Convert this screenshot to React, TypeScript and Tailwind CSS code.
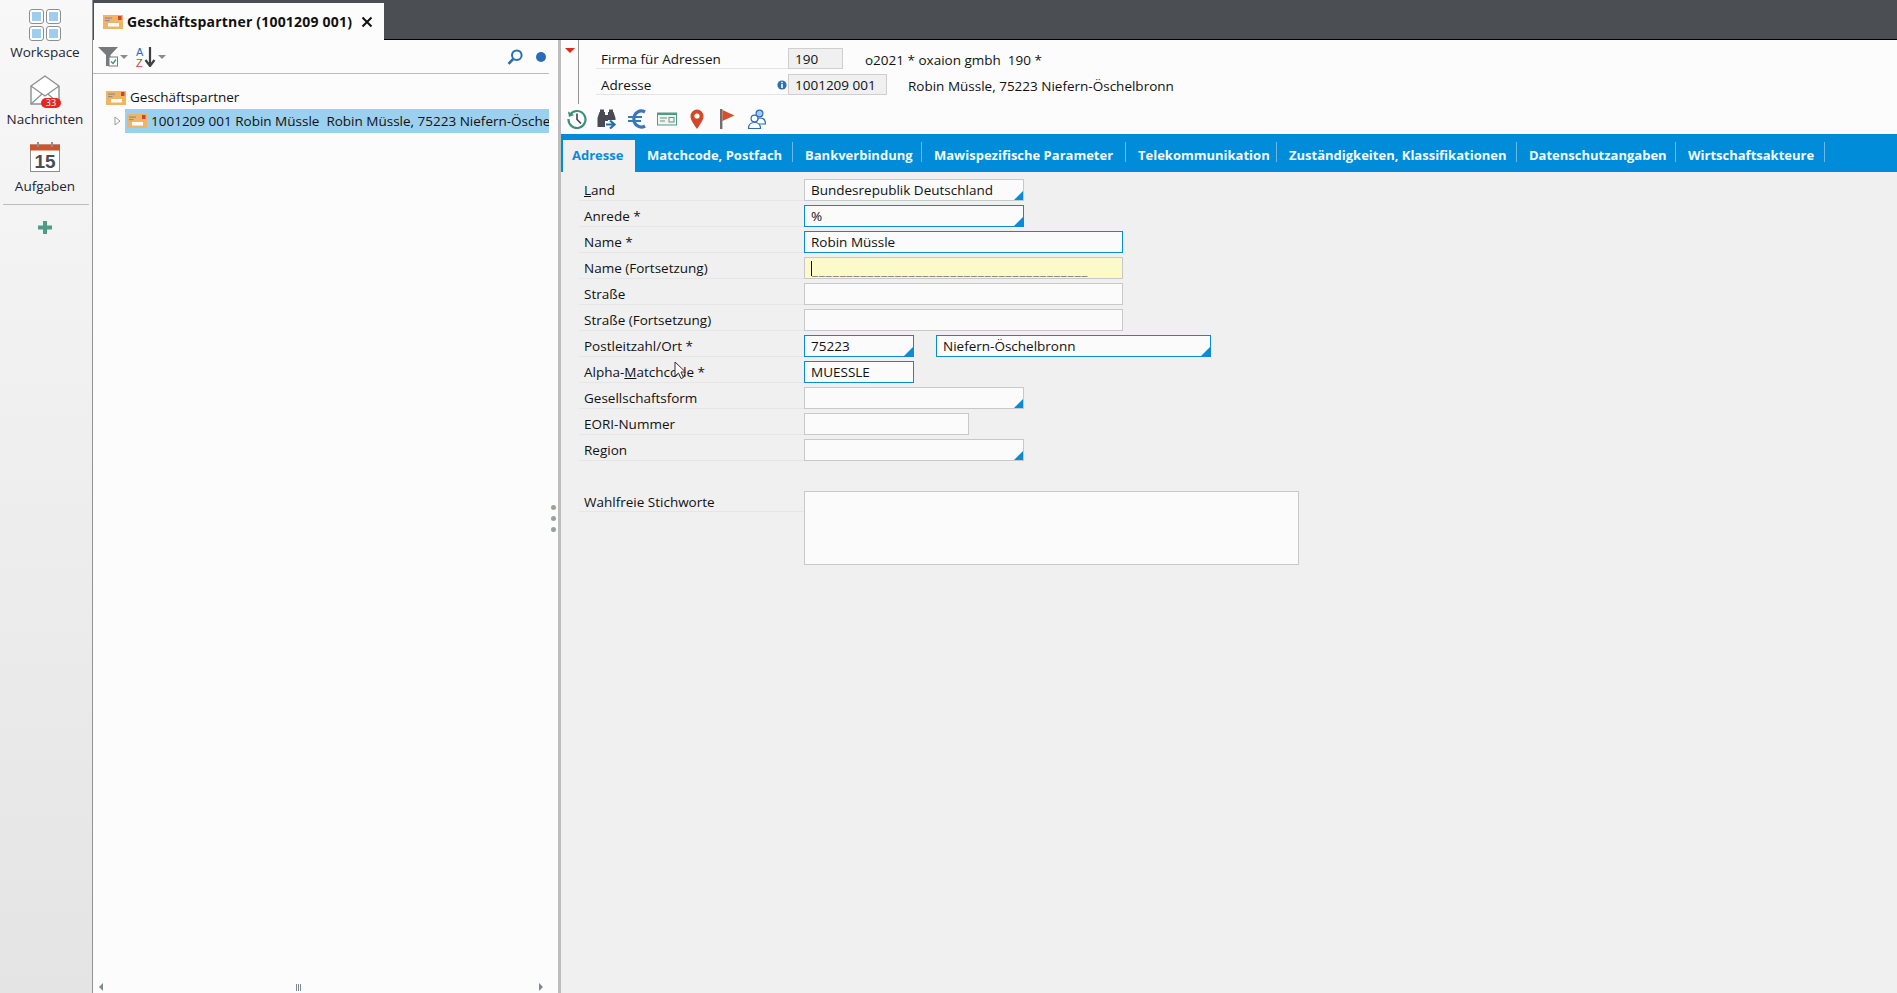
import type { ReactNode } from "react";

const fields = [
  { label: "Land", key: "L", value: "Bundesrepublik Deutschland", w: "w-[220px]", drop: true },
  { label: "Anrede *", value: "%", w: "w-[220px]", drop: true, blue: true },
  { label: "Name *", value: "Robin Müssle", w: "w-[319px]", blue: true },
  { label: "Name (Fortsetzung)", w: "w-[319px]", focus: true },
  { label: "Straße", w: "w-[319px]" },
  { label: "Straße (Fortsetzung)", w: "w-[319px]" },
  { label: "Postleitzahl/Ort *", value: "75223", w: "w-[110px]", drop: true, blue: true, city: true },
  { label: "Alpha-Matchcode *", key: "M", value: "MUESSLE", w: "w-[110px]", blue: true },
  { label: "Gesellschaftsform", w: "w-[220px]", drop: true },
  { label: "EORI-Nummer", w: "w-[165px]" },
  { label: "Region", w: "w-[220px]", drop: true },
];

const tabs = [
  { t: "Matchcode, Postfach", w: "w-[158px]" },
  { t: "Bankverbindung", w: "w-[129px]" },
  { t: "Mawispezifische Parameter", w: "w-[204px]" },
  { t: "Telekommunikation", w: "w-[151px]" },
  { t: "Zuständigkeiten, Klassifikationen", w: "w-[240px]" },
  { t: "Datenschutzangaben", w: "w-[159px]" },
  { t: "Wirtschaftsakteure", w: "w-[149px]" },
];

function MailCard({ className }: { className: string }) {
  return (
    <svg viewBox="0 0 20 14" className={className}>
      <rect width="20" height="14" fill="#efb562" />
      <rect x="2" y="2.5" width="7" height="1.2" fill="#8a8f95" />
      <rect x="2" y="5" width="4.5" height="1.2" fill="#8a8f95" />
      <rect x="15" y="1" width="3.5" height="4" fill="#d2452a" />
      <rect x="5" y="8" width="11" height="3.5" fill="#ffffff" />
    </svg>
  );
}

function Caret() {
  return <div className="w-0 h-0 border-x-[4px] border-x-transparent border-t-[4px] border-t-[#8b8b8b]" />;
}

function DropMark() {
  return <div className="absolute right-0 bottom-0 w-0 h-0 border-l-[9px] border-l-transparent border-b-[9px] border-b-[#0a8bd8]" />;
}

function Rail({ label, labelGap = "mt-[2px]", children }: { label: string; labelGap?: string; children: ReactNode }) {
  return (
    <div className="flex flex-col items-center h-[67px] pr-[2px]">
      <div className="h-[33px] flex items-center justify-center">{children}</div>
      <div className={labelGap + " leading-[18px] text-[#1c2530]"}>{label}</div>
    </div>
  );
}

function HeaderRow({ label, value, w, text, info, gap }: { label: string; value: string; w: string; text: string; info?: boolean; gap: string }) {
  return (
    <div className="flex h-[21px] mb-[5px]">
      <div className="w-[192px] pl-[5px] pt-[2px] border-b border-[#e4e4e4] flex items-center justify-between pr-[1px]">
        <span>{label}</span>
        {info && (
          <svg viewBox="0 0 10 10" className="w-[10px] h-[10px]">
            <circle cx="5" cy="5" r="4.6" fill="#2f6fb0" />
            <rect x="4.2" y="1.8" width="1.6" height="1.4" fill="#fff" />
            <rect x="4.2" y="4" width="1.6" height="4" fill="#fff" />
          </svg>
        )}
      </div>
      <div className={w + " bg-[#f0f0f0] border border-[#cfcfcf] pl-[6px] pt-[2px] flex items-center"}>{value}</div>
      <div className={gap + " whitespace-pre pt-[3px] flex items-center"}>{text}</div>
    </div>
  );
}

function Field({ f }: { f: (typeof fields)[number] }) {
  const border = f.blue ? "border-[#0a8bd8]" : "border-[#c8c8c8]";
  const bg = f.focus ? "bg-[#fbfac8]" : "bg-[#fbfbfb]";
  return (
    <div className="flex h-[22px] mb-[4px]">
      <div className="w-[225px] pl-[5px] pt-[1px] border-b border-[#e6e6e6] flex items-center">
        {f.key ? (
          f.key === "L" ? (
            <span><span className="underline">L</span>and</span>
          ) : (
            <span>Alpha-<span className="underline">M</span>atchcode *</span>
          )
        ) : (
          f.label
        )}
      </div>
      <div className={f.w + " relative border pl-[6px] pt-[1px] flex items-center " + border + " " + bg}>
        {f.value}
        {f.focus && (
          <>
            <div className="absolute left-[6px] top-[3px] w-px h-[15px] bg-[#111]" />
            <div className="absolute left-[7px] top-[3px] whitespace-pre tracking-[1px] text-[#777] leading-[18px]">
              {"_".repeat(40)}
            </div>
          </>
        )}
        {f.drop && <DropMark />}
      </div>
      {f.city && (
        <div className="ml-[22px] w-[275px] relative border border-[#0a8bd8] bg-[#fbfbfb] pl-[6px] pt-[1px] flex items-center">
          Niefern-Öschelbronn
          <DropMark />
        </div>
      )}
    </div>
  );
}

export default function App() {
  return (
    <div className="relative flex h-screen w-screen overflow-hidden bg-[#f0f0f0] text-[13.5px] text-[#111] font-['Open_Sans',sans-serif]">
      {/* linke Leiste */}
      <div className="w-[93px] shrink-0 flex flex-col border-r border-[#8f9396] bg-gradient-to-b from-[#f8f8f8] to-[#e4e4e4]">
        <div className="pt-[8px] flex flex-col">
          <Rail label="Workspace">
            <svg viewBox="0 0 32 32" className="w-[32px] h-[32px]">
              {[0, 17].map((x) =>
                [0, 17].map((y) => (
                  <g key={x + "-" + y}>
                    <rect x={x + 0.5} y={y + 0.5} width="14" height="14" rx="2.5" fill="#fff" stroke="#8c8f92" />
                    <rect x={x + 3} y={y + 3} width="9" height="9" fill="#9ecdf0" />
                  </g>
                ))
              )}
            </svg>
          </Rail>
          <Rail label="Nachrichten">
            <div className="relative w-[32px] h-[33px]">
              <svg viewBox="0 0 30 31" className="w-[30px] h-[31px] ml-[1px]">
                <path d="M1 11 L15 1 L29 11 V29 H1 Z" fill="#fff" stroke="#8c8f92" strokeWidth="1.4" />
                <path d="M1 11 L15 21 L29 11 M1 29 L12 19 M29 29 L18 19" fill="none" stroke="#8c8f92" strokeWidth="1.2" />
              </svg>
              <div className="absolute left-[12px] top-[23px] w-[20px] h-[10px] rounded-full bg-[#e0281c] text-white text-[9px] leading-[10px] text-center">33</div>
            </div>
          </Rail>
          <div className="-mt-[2px]">
            <Rail label="Aufgaben" labelGap="mt-[4px]">
              <svg viewBox="0 0 30 30" className="w-[30px] h-[30px]">
                <rect x="0.5" y="3" width="29" height="26.5" fill="#fff" stroke="#8c8f92" />
                <rect x="0" y="2.5" width="30" height="6" fill="#d2502e" />
                <rect x="7" y="0" width="2" height="5" fill="#8c8f92" />
                <rect x="21" y="0" width="2" height="5" fill="#8c8f92" />
                <text x="15" y="26" textAnchor="middle" fontSize="19" fontWeight="700" fill="#4a4d52" fontFamily="Liberation Sans">15</text>
              </svg>
            </Rail>
          </div>
        </div>
        <div className="mx-[3px] -mt-[3px] border-t border-[#bdbdbd]" />
        <div className="mt-[16px] flex justify-center pr-[2px]">
          <svg viewBox="0 0 14 13" className="w-[14px] h-[13px]">
            <path d="M5 0h4v4.5h5v4H9V13H5V8.5H0v-4h5z" fill="#4f9c85" />
          </svg>
        </div>
      </div>

      <div className="flex-1 min-w-0 flex flex-col">
        {/* Kopfleiste mit Reiter */}
        <div className="h-[40px] shrink-0 flex items-end bg-[#4b4e53]">
          <div className="h-[37px] w-[290px] bg-[#fcfcfc] flex items-center pl-[9px] ml-[1px]">
            <MailCard className="w-[20px] h-[14px]" />
            <span className="ml-[4px] text-[14px] tracking-[0.2px] font-bold whitespace-nowrap text-[#111]">Geschäftspartner (1001209 001)</span>
            <svg viewBox="0 0 12 12" className="w-[12px] h-[12px] ml-[9px]">
              <path d="M1.5 1.5 L10.5 10.5 M10.5 1.5 L1.5 10.5" stroke="#111" strokeWidth="2" />
            </svg>
          </div>
          <div className="flex-1 h-full border-b border-black" />
        </div>

        <div className="flex-1 min-h-0 flex">
          {/* Baum */}
          <div className="w-[465px] shrink-0 bg-[#fcfcfc] pr-[9px] flex flex-col relative">
            <div className="h-[34px] shrink-0 border-b border-[#bdbdbd] flex items-center pl-[5px]">
              <svg viewBox="0 0 21 20" className="w-[21px] h-[20px]">
                <path d="M0 0 H20 L12.5 8 V19 H8 V8 Z" fill="#77797c" />
                <rect x="11" y="10" width="8.5" height="9" fill="#fff" stroke="#77797c" />
                <path d="M13 14.5 L15 16.5 L18 12.5" fill="none" stroke="#3d9b78" strokeWidth="1.4" />
              </svg>
              <div className="ml-[1px]"><Caret /></div>
              <svg viewBox="0 0 20 20" className="w-[20px] h-[20px] ml-[8px]">
                <text x="0" y="9" fontSize="11" fontWeight="400" fill="#2a6cb5" fontFamily="Liberation Sans">A</text>
                <text x="0" y="19.5" fontSize="11" fontWeight="400" fill="#d2452a" fontFamily="Liberation Sans">Z</text>
                <path d="M14 0 V17 M9.5 13 L14 19 L18.5 13" fill="none" stroke="#3d3f42" strokeWidth="2.2" />
              </svg>
              <div className="ml-[2px]"><Caret /></div>
              <svg viewBox="0 0 16 16" className="w-[16px] h-[16px] ml-auto">
                <circle cx="9.8" cy="6.2" r="4.8" fill="none" stroke="#2a6cb5" strokeWidth="2" />
                <path d="M6.2 10 L1.5 14.8" stroke="#2a6cb5" strokeWidth="2.6" />
              </svg>
              <div className="w-[10px] h-[10px] rounded-full bg-[#2a6cb5] ml-[13px] mr-[3px]" />
            </div>
            <div className="flex-1 min-h-0 overflow-hidden">
              <div className="flex items-center mt-[12px] h-[23px] ml-[13px]">
                <MailCard className="w-[20px] h-[14px]" />
                <span className="ml-[4px]">Geschäftspartner</span>
              </div>
              <div className="flex items-center ml-[21px] h-[24px]">
                <svg viewBox="0 0 7 10" className="w-[7px] h-[10px] mr-[4px]">
                  <path d="M1 1 L6 5 L1 9 Z" fill="#fff" stroke="#9a9a9a" />
                </svg>
                <div className="flex-1 min-w-0 bg-[#9bd0ef] h-[24px] flex items-center pl-[2px] overflow-hidden">
                  <MailCard className="w-[20px] h-[14px] shrink-0" />
                  <span className="ml-[4px] whitespace-pre">{"1001209 001 Robin Müssle  Robin Müssle, 75223 Niefern-Öschelbronn"}</span>
                </div>
              </div>
            </div>
            <div className="h-[12px] shrink-0 flex items-center pl-[6px] pr-[6px]">
              <div className="w-0 h-0 border-y-[4px] border-y-transparent border-r-[4px] border-r-[#7f8a8c]" />
              <div className="flex gap-[1px] ml-[193px]">
                <div className="w-px h-[7px] bg-[#7f8a8c]" />
                <div className="w-px h-[7px] bg-[#7f8a8c]" />
                <div className="w-px h-[7px] bg-[#7f8a8c]" />
              </div>
              <div className="ml-auto w-0 h-0 border-y-[4px] border-y-transparent border-l-[4px] border-l-[#7f8a8c]" />
            </div>
            <div className="absolute right-[2px] top-[465px] flex flex-col gap-[6px]">
              <div className="w-[5px] h-[5px] rounded-full bg-[#98a298]" />
              <div className="w-[5px] h-[5px] rounded-full bg-[#98a298]" />
              <div className="w-[5px] h-[5px] rounded-full bg-[#98a298]" />
            </div>
          </div>
          <div className="w-[3px] shrink-0 bg-[#bdbdbd]" />

          {/* Formular */}
          <div className="flex-1 min-w-0 flex flex-col">
            <div className="h-[94px] shrink-0 bg-[#fcfcfc] relative">
              <div className="flex h-[64px]">
                <div className="w-[18px] border-r border-[#8f9396] relative pl-[4px] pt-[8px]">
                  <div className="w-0 h-0 border-x-[5px] border-x-transparent border-t-[5px] border-t-[#e0281c]" />
                </div>
                <div className="pt-[8px] pl-[17px]">
                  <HeaderRow label="Firma für Adressen" value="190" w="w-[55px]" text="o2021 * oxaion gmbh  190 *" gap="ml-[22px]" />
                  <HeaderRow label="Adresse" value="1001209 001" w="w-[99px]" text="Robin Müssle, 75223 Niefern-Öschelbronn" info gap="ml-[21px]" />
                </div>
              </div>
              <div className="flex gap-[10px] pl-[6px] mt-[5px]">
                <svg viewBox="0 0 20 20" className="w-[20px] h-[20px]">
                  <path d="M3.5 5 A8.5 8.5 0 1 1 1.5 10" fill="none" stroke="#3d8f78" strokeWidth="2.2" />
                  <path d="M1 2.5 L2 8 L7 6 Z" fill="#3d8f78" />
                  <path d="M10 4.5 V10.5 L14 14.5" fill="none" stroke="#3f4347" strokeWidth="1.6" />
                </svg>
                <svg viewBox="0 0 20 20" className="w-[20px] h-[20px]">
                  <path d="M2.5 3 H8 V18 H0.5 V9 Z M11 3 H16.5 L18.5 9 V11 H11 Z M8 6 H11 V12 H8 Z" fill="#4a4a55" />
                  <rect x="3" y="0.5" width="4" height="2.5" fill="#4a4a55" />
                  <rect x="12" y="0.5" width="4" height="2.5" fill="#4a4a55" />
                  <path d="M9 15.5 H16 M13 11.5 L17.5 15.5 L13 19.5" fill="none" stroke="#1f6fb5" strokeWidth="2.2" />
                </svg>
                <svg viewBox="0 0 20 20" className="w-[20px] h-[20px]">
                  <path d="M18 3 A7.5 8 0 1 0 18 17" fill="none" stroke="#3a76bb" strokeWidth="3.2" />
                  <path d="M1 8 H15 M1 12 H14" stroke="#3a76bb" strokeWidth="2" />
                </svg>
                <svg viewBox="0 0 20 20" className="w-[20px] h-[20px]">
                  <rect x="0.5" y="4" width="19" height="12" fill="#eef6f2" stroke="#4d9c85" />
                  <rect x="0.5" y="4" width="19" height="2" fill="#4d9c85" />
                  <path d="M3 9 H10 M3 12 H8" stroke="#6e8f86" />
                  <rect x="12" y="8.5" width="5" height="4.5" fill="none" stroke="#6e8f86" />
                </svg>
                <svg viewBox="0 0 20 20" className="w-[20px] h-[20px]">
                  <path d="M10 20 C6 14 3.5 11 3.5 7 A6.5 6.5 0 0 1 16.5 7 C16.5 11 14 14 10 20 Z" fill="#d2492a" />
                  <circle cx="10" cy="7" r="2.6" fill="#fff" />
                </svg>
                <svg viewBox="0 0 20 20" className="w-[20px] h-[20px]">
                  <rect x="3" y="0" width="2.4" height="20" fill="#6f6f6f" />
                  <path d="M5.4 1 L17.5 6.5 L5.4 12 Z" fill="#d2502e" />
                </svg>
                <svg viewBox="0 0 20 20" className="w-[20px] h-[20px]" fill="#fff" stroke="#2a6cb5" strokeWidth="1.2">
                  <circle cx="12.5" cy="4.5" r="3.4" fill="#9ecdf0" />
                  <path d="M9 14 C10 10 11 9 13 9 C16 9 18.5 11 18.5 15 H12" />
                  <circle cx="7.5" cy="9.5" r="3.4" />
                  <path d="M1.5 19.5 C1.5 15.5 4 13.5 7.5 13.5 C11 13.5 13.5 15.5 13.5 19.5 Z" />
                </svg>
              </div>
            </div>

            <div className="h-[38px] shrink-0 bg-[#008cd8] flex items-start pt-[6px] pl-[2px] text-[13px] font-bold text-[#f4f9fd]">
              <div className="h-[32px] w-[72px] bg-[#f0f0f0] text-[#0a8bd8] flex items-center pl-[9px]">Adresse</div>
              <div className="flex mt-[2px]">
                {tabs.map((t) => (
                  <div key={t.t} className={t.w + " h-[20px] flex items-center pt-[8px] pl-[12px] border-r border-[#6cb8e6] whitespace-nowrap"}>{t.t}</div>
                ))}
              </div>
            </div>

            <div className="flex-1 min-h-0 pt-[7px] pl-[18px]">
              {fields.map((f) => (
                <Field key={f.label} f={f} />
              ))}
              <div className="flex mt-[30px]">
                <div className="w-[225px] h-[21px] pl-[5px] pt-[3px] border-b border-[#e6e6e6] flex items-center">Wahlfreie Stichworte</div>
                <div className="w-[495px] h-[74px] border border-[#c8c8c8] bg-[#fbfbfb]" />
              </div>
            </div>
          </div>
        </div>
      </div>

      {/* Mauszeiger */}
      <svg viewBox="0 0 13 19" className="absolute left-[674px] top-[361px] w-[13px] h-[19px]">
        <path d="M1 1 V15 L4.5 12 L7 17.5 L9.5 16.5 L7 11 H11.5 Z" fill="#fff" stroke="#333" strokeWidth="1" />
      </svg>
    </div>
  );
}
